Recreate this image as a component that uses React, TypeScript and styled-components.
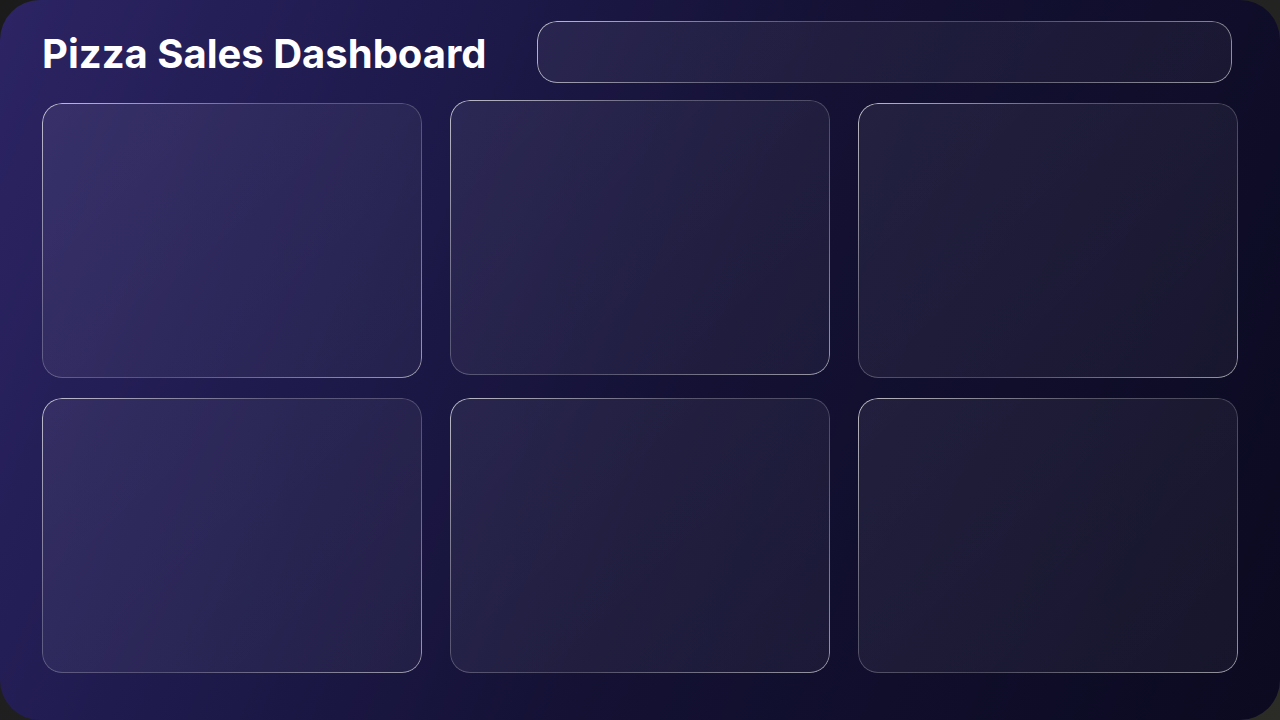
import React from "react";
import styled, { createGlobalStyle } from "styled-components";

const Global = createGlobalStyle`
  html, body {
    margin: 0;
    padding: 0;
    width: 1280px;
    height: 720px;
    overflow: hidden;
    background: linear-gradient(135deg, #1b1b1b 0%, #222 60%, #2c2c26 100%);
  }
  * { box-sizing: border-box; }
`;

const Shell = styled.div`
  width: 1280px;
  height: 720px;
  border-radius: 40px;
  overflow: hidden;
  background: linear-gradient(112deg, #2c2464 0%, #1e1a4c 28%, #141134 55%, #0b0a20 100%);
  padding: 21px 42px 47px 42px;
  display: flex;
  flex-direction: column;
  gap: 20px;
  font-family: Inter, "Liberation Sans", sans-serif;
`;

const Header = styled.header`
  height: 62px;
  display: flex;
  align-items: center;
  gap: 50px;
  padding-right: 6px;
`;

const Title = styled.h1`
  margin: 0;
  padding-top: 3px;
  font-size: 40px;
  font-weight: 700;
  color: #ffffff;
  white-space: nowrap;
`;

const glassBorder = `
  &::before {
    content: "";
    position: absolute;
    inset: 0;
    border-radius: inherit;
    padding: 1px;
    background: linear-gradient(
      135deg,
      rgba(255, 255, 255, 0.7) 0%,
      rgba(255, 255, 255, 0.25) 35%,
      rgba(255, 255, 255, 0.2) 60%,
      rgba(255, 255, 255, 0.55) 100%
    );
    -webkit-mask: linear-gradient(#000 0 0) content-box, linear-gradient(#000 0 0);
    -webkit-mask-composite: xor;
    mask-composite: exclude;
    pointer-events: none;
  }
`;

const FilterBar = styled.div`
  position: relative;
  flex: 1;
  height: 62px;
  border-radius: 20px;
  background: linear-gradient(135deg, rgba(255, 255, 255, 0.06), rgba(255, 255, 255, 0.045));
  ${glassBorder}
`;

const Grid = styled.main`
  display: grid;
  grid-template-columns: repeat(3, 380px);
  grid-template-rows: repeat(2, 275px);
  column-gap: 28px;
  row-gap: 20px;
`;

const Card = styled.section<{ $lifted?: boolean }>`
  position: relative;
  border-radius: 20px;
  background: linear-gradient(135deg, rgba(255, 255, 255, 0.065), rgba(255, 255, 255, 0.045));
  transform: translateY(${(p) => (p.$lifted ? "-3px" : "0")});
  ${glassBorder}
`;

export default function App() {
  const cards = [0, 1, 2, 3, 4, 5];
  return (
    <>
      <Global />
      <Shell>
        <Header>
          <Title>Pizza Sales Dashboard</Title>
          <FilterBar />
        </Header>
        <Grid>
          {cards.map((i) => (
            <Card key={i} $lifted={i === 1} />
          ))}
        </Grid>
      </Shell>
    </>
  );
}
